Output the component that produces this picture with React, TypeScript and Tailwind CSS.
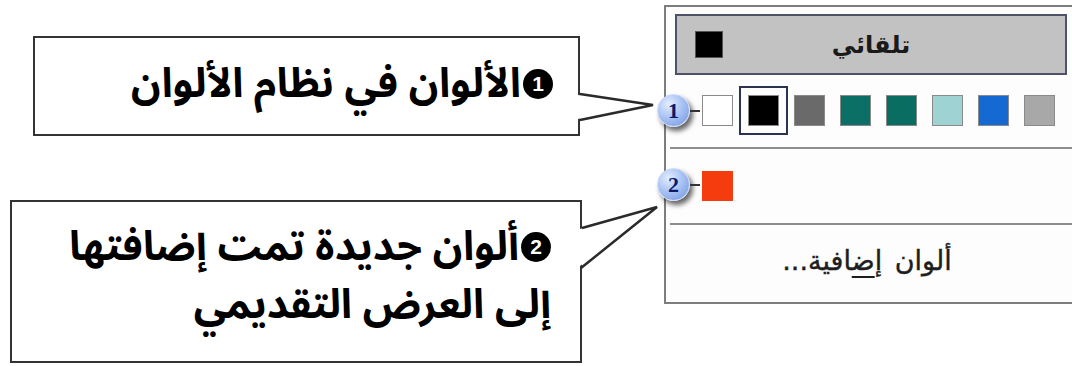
import React from 'react';

const swatches = ['#ffffff', '#000000', '#6a6a6a', '#0c6f66', '#0a6d62', '#9fd2d2', '#1569d3', '#a8a8a8'];

const Badge: React.FC<{ n: string; top: string }> = ({ n, top }) => (
  <div className={`absolute left-[657px] ${top} flex items-center`}>
    <div className="w-[33px] h-[33px] rounded-full flex items-center justify-center bg-[radial-gradient(circle_at_35%_30%,#e4eeff_0%,#a9c3f4_45%,#6f93de_100%)] shadow-[3px_4px_5px_rgba(0,0,0,0.6)] border border-[#c9d8f6]">
      <span className="text-[22px] font-bold text-[#0b1a6b] leading-none [font-family:'Liberation_Serif',serif]">{n}</span>
    </div>
    <div className="w-[10px] h-[2px] bg-[#333]" />
  </div>
);

const Num: React.FC<{ n: string }> = ({ n }) => (
  <span className="inline-block align-[6px] ml-[2px] w-[30px] h-[30px] rounded-full bg-black text-white text-center text-[21px] leading-[30px] font-bold [font-family:'Liberation_Sans',sans-serif]">
    {n}
  </span>
);

const App: React.FC = () => {
  return (
    <div className="relative w-[1072px] h-[366px] bg-white overflow-hidden flex [font-family:'Noto_Sans_Arabic','DejaVu_Sans',sans-serif]">
      {/* callouts */}
      <div className="w-[664px] shrink-0 flex flex-col">
        <div
          dir="rtl"
          className="ml-[33px] mt-[36px] w-[547px] h-[100px] border-2 border-[#333] flex items-center pr-[25px] pb-[4px]"
        >
          <p className="text-[41px] font-bold text-black leading-none">
            <Num n="1" />الألوان في نظام الألوان
          </p>
        </div>
        <div
          dir="rtl"
          className="ml-[10px] mt-[64px] w-[572px] h-[163px] border-2 border-[#333] flex flex-col justify-center pr-[29px] pb-[12px]"
        >
          <p className="text-[41px] font-bold text-black leading-[58px]">
            <Num n="2" />ألوان جديدة تمت إضافتها
          </p>
          <p className="text-[41px] font-bold text-black leading-[58px]">إلى العرض التقديمي</p>
        </div>
      </div>

      {/* colour menu */}
      <div className="mt-[5px] h-[299px] flex-1 border-2 border-r-0 border-[#7d7d7d] bg-[#fdfdfd] flex flex-col [font-family:'DejaVu_Sans',sans-serif]">
        <div className="ml-[9px] mt-[7px] w-[392px] h-[61px] border-2 border-[#4c5366] bg-[#c2c2c2] grid grid-cols-[1fr_auto_1fr] items-center">
          <div className="ml-[18px] w-[28px] h-[27px] bg-black border border-[#555]" />
          <span dir="rtl" className="text-[24px] font-bold text-[#1a1a1a]">تلقائي</span>
          <div />
        </div>

        <div className="mt-[20px] ml-[36px] flex gap-[15px]">
          {swatches.map((c, i) => (
            <div
              key={i}
              className={`w-[31px] h-[31px] border border-[#8a8a8a] ${i === 1 ? 'outline-2 outline-offset-[7px] outline-[#2b3350]' : ''}`}
              style={{ backgroundColor: c }}
            />
          ))}
        </div>

        <div className="mt-[21px] ml-[4px] h-[2px] bg-[#8c8c8c]" />

        <div className="mt-[22px] ml-[36px] w-[31px] h-[30px] bg-[#f53c0e]" />

        <div className="mt-[22px] ml-[4px] h-[2px] bg-[#8c8c8c]" />

        <div className="flex-1 flex items-center justify-center pr-[4px] pb-[4px]">
          <span dir="rtl" className="text-[27px] text-[#1e1e1e] [word-spacing:4px] [-webkit-text-stroke:0.4px_#1e1e1e]">
            ألوان إ<span className="underline underline-offset-[6px]">ض</span>افية<span className="tracking-[6px]">...</span>
          </span>
        </div>
      </div>

      {/* pointers */}
      <svg className="absolute inset-0 pointer-events-none" width="1072" height="366">
        <polygon points="578,95 653,105 578,119" fill="#fff" />
        <polyline points="580,94 653,105 580,120" fill="none" stroke="#2a2a2a" strokeWidth="2.5" />
        <polygon points="580,229 657,207 580,266" fill="#fff" />
        <polyline points="582,228 657,207 581,268" fill="none" stroke="#2a2a2a" strokeWidth="2.5" />
      </svg>

      <Badge n="1" top="top-[94px]" />
      <Badge n="2" top="top-[168px]" />
    </div>
  );
};

export default App;
